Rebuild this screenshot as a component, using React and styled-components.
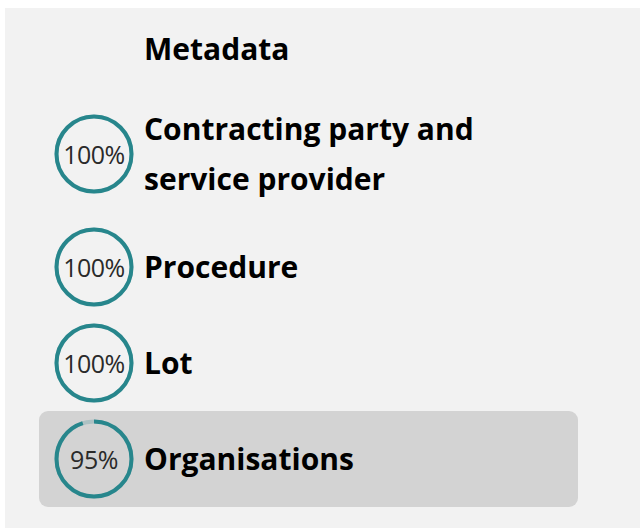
import React from "react";
import styled, { createGlobalStyle } from "styled-components";

const Global = createGlobalStyle`
  html, body {
    margin: 0;
    background: #ffffff;
  }
  body {
    font-family: "Open Sans", "Liberation Sans", sans-serif;
  }
`;

const items = [
  { label: "Metadata" },
  { label: ["Contracting party and", "service provider"], percent: 100 },
  { label: "Procedure", percent: 100 },
  { label: "Lot", percent: 100 },
  { label: "Organisations", percent: 95, active: true },
];

const ProgressRing = ({ percent }) => {
  const r = 37.5;
  const c = 2 * Math.PI * r;
  return (
    <Ring>
      <svg width="80" height="80" viewBox="0 0 80 80">
        <circle cx="40" cy="40" r={r} fill="none" stroke="rgba(39,134,140,0.22)" strokeWidth="4" />
        <circle
          cx="40"
          cy="40"
          r={r}
          fill="none"
          stroke="#27868c"
          strokeWidth="4"
          strokeDasharray={`${(c * percent) / 100} ${c}`}
          transform="rotate(-90 40 40)"
        />
      </svg>
      <Percent>{percent}%</Percent>
    </Ring>
  );
};

export default function App() {
  return (
    <>
      <Global />
      <Page>
        <Panel>
          <List>
            {items.map((item, i) => (
              <Row key={i} $active={item.active}>
                {item.percent !== undefined ? <ProgressRing percent={item.percent} /> : <Spacer />}
                <Label>
                  {Array.isArray(item.label)
                    ? item.label.map((l, j) => <div key={j}>{l}</div>)
                    : item.label}
                </Label>
              </Row>
            ))}
          </List>
        </Panel>
      </Page>
    </>
  );
}

const Page = styled.div`
  padding: 8px 0 1px 5px;
  height: 529px;
  box-sizing: border-box;
  overflow: hidden;
`;

const Panel = styled.div`
  background: #f2f2f2;
  height: 100%;
  padding-left: 34px;
  padding-top: 1px;
  box-sizing: border-box;
`;

const List = styled.div`
  width: 539px;
  display: flex;
  flex-direction: column;
`;

const Row = styled.div`
  display: flex;
  align-items: center;
  gap: 10px;
  padding: 8px 15px;
  border-radius: 9px;
  background: ${(p) => (p.$active ? "#d3d3d3" : "transparent")};
`;

const Spacer = styled.div`
  width: 80px;
  flex-shrink: 0;
`;

const Ring = styled.div`
  position: relative;
  width: 80px;
  height: 80px;
  flex-shrink: 0;
  display: flex;
  align-items: center;
  justify-content: center;

  svg {
    position: absolute;
    inset: 0;
  }
`;

const Percent = styled.span`
  position: relative;
  font-family: "Open Sans", "Liberation Sans", sans-serif;
  font-size: 25px;
  font-weight: 500;
  color: #2a2a2a;
  letter-spacing: -0.5px;
`;

const Label = styled.div`
  font-family: "Open Sans", "Liberation Sans", sans-serif;
  font-weight: 700;
  font-size: 30px;
  line-height: 50px;
  padding: 7px 0;
  color: #000000;
`;
